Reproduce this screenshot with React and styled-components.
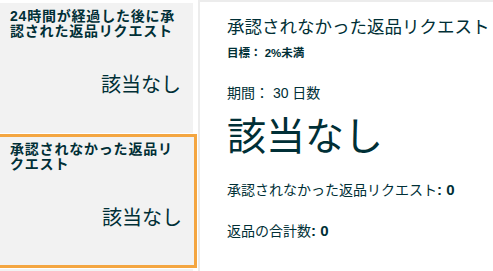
import React from "react";
import styled, { createGlobalStyle } from "styled-components";

const GlobalStyle = createGlobalStyle`
  html, body {
    margin: 0;
    padding: 0;
    background: #ffffff;
  }
  body {
    font-family: "Liberation Sans", Arial, "Noto Sans CJK JP", sans-serif;
    color: #002f36;
  }
`;

const Pagina = styled.div`
  display: flex;
  width: 493px;
  height: 271px;
  overflow: hidden;
`;

const ColunaCards = styled.div`
  width: 197px;
  flex-shrink: 0;
  display: flex;
  flex-direction: column;
  align-items: flex-start;
  gap: 1px;
  padding-top: 3px;
  box-sizing: border-box;
`;

// o card selecionado ganha a borda laranja (a borda esquerda fica fora da tela)
const Card = styled.div`
  box-sizing: border-box;
  flex-shrink: 0;
  background: #f2f2f2;
  height: ${(props) => (props.selecionado ? "134px" : "130px")};
  width: ${(props) => (props.selecionado ? "197px" : "193px")};
  border: ${(props) => (props.selecionado ? "3px solid #f4a641" : "none")};
  border-left: none;
  padding: ${(props) => (props.selecionado ? "5px 12px 0 10px" : "6px 12px 0 10px")};
  display: flex;
  flex-direction: column;
`;

const TituloCard = styled.div`
  font-size: 14px;
  font-weight: bold;
  line-height: 15px;
  letter-spacing: 0.8px;
  height: 30px;
`;

const ValorCard = styled.div`
  margin-top: 34px;
  text-align: right;
  font-size: 20px;
  line-height: 24px;
  font-weight: normal;
`;

const Painel = styled.div`
  flex: 1;
  margin-left: 1px;
  border-left: 2px solid #ececec;
  border-top: 2px solid #ececec;
  background: #ffffff;
  padding: 15px 0 0 27px;
  box-sizing: border-box;
  white-space: nowrap;
`;

const TituloPainel = styled.div`
  font-size: 17.5px;
  line-height: 20px;
`;

const Meta = styled.div`
  margin-top: 9px;
  font-size: 11.5px;
  line-height: 14px;
  font-weight: bold;
`;

const Periodo = styled.div`
  margin-top: 25px;
  font-size: 14px;
  line-height: 16px;
`;

const Destaque = styled.div`
  margin-top: 14px;
  font-size: 39px;
  line-height: 44px;
`;

const Linha = styled.div`
  margin-top: ${(props) => props.espaco || "23px"};
  font-size: 14px;
  line-height: 18px;

  b {
    font-size: 15px;
  }
`;

function App() {
  return (
    <>
      <GlobalStyle />
      <Pagina>
        <ColunaCards>
          <Card>
            <TituloCard>24時間が経過した後に承認された返品リクエスト</TituloCard>
            <ValorCard>該当なし</ValorCard>
          </Card>
          <Card selecionado>
            <TituloCard>承認されなかった返品リクエスト</TituloCard>
            <ValorCard>該当なし</ValorCard>
          </Card>
          <Card />
        </ColunaCards>
        <Painel>
          <TituloPainel>承認されなかった返品リクエスト</TituloPainel>
          <Meta>目標： 2%未満</Meta>
          <Periodo>期間： 30 日数</Periodo>
          <Destaque>該当なし</Destaque>
          <Linha espaco="22px">
            承認されなかった返品リクエスト<b>: 0</b>
          </Linha>
          <Linha>
            返品の合計数<b>: 0</b>
          </Linha>
        </Painel>
      </Pagina>
    </>
  );
}

export default App;
